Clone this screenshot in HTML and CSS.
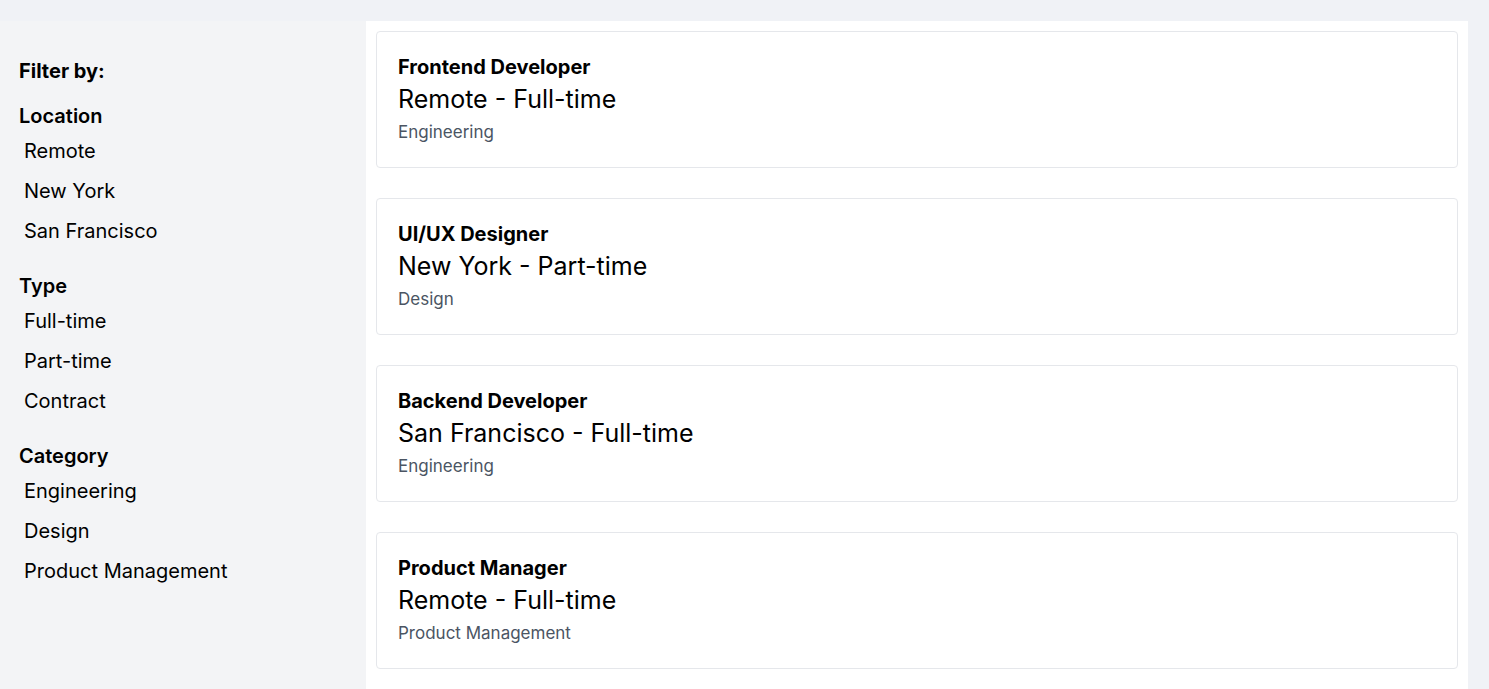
FILE: index.html
```html
<!DOCTYPE html>
<html lang="en">
<head>
<meta charset="utf-8">
<title>Jobs</title>
<link rel="stylesheet" href="styles.css">
</head>
<body>
<div class="layout">
  <aside class="sidebar">
    <h2 class="filter-title">Filter by:</h2>
    <div class="group">
      <h3 class="group-title">Location</h3>
      <ul class="options">
        <li>Remote</li>
        <li>New York</li>
        <li>San Francisco</li>
      </ul>
    </div>
    <div class="group">
      <h3 class="group-title">Type</h3>
      <ul class="options">
        <li>Full-time</li>
        <li>Part-time</li>
        <li>Contract</li>
      </ul>
    </div>
    <div class="group">
      <h3 class="group-title">Category</h3>
      <ul class="options">
        <li>Engineering</li>
        <li>Design</li>
        <li>Product Management</li>
      </ul>
    </div>
  </aside>
  <main class="main">
    <div class="card">
      <div class="job-title">Frontend Developer</div>
      <div class="job-meta">Remote - Full-time</div>
      <div class="job-cat">Engineering</div>
    </div>
    <div class="card">
      <div class="job-title">UI/UX Designer</div>
      <div class="job-meta">New York - Part-time</div>
      <div class="job-cat">Design</div>
    </div>
    <div class="card">
      <div class="job-title">Backend Developer</div>
      <div class="job-meta">San Francisco - Full-time</div>
      <div class="job-cat">Engineering</div>
    </div>
    <div class="card">
      <div class="job-title">Product Manager</div>
      <div class="job-meta">Remote - Full-time</div>
      <div class="job-cat">Product Management</div>
    </div>
  </main>
</div>
</body>
</html>
```

FILE: styles.css
```css
* { box-sizing: border-box; }
html, body { margin: 0; padding: 0; }
body {
  background: #f0f2f6;
  font-family: Inter, "Noto Sans", sans-serif;
  color: #000;
  padding-top: 21px;
  padding-right: 21px;
}
.layout {
  display: flex;
  align-items: stretch;
  min-height: 668px;
}
.sidebar {
  width: 366px;
  flex-shrink: 0;
  background: #f3f4f6;
  padding: 35px 19px 20px;
}
.filter-title {
  font-size: 20px;
  font-weight: 700;
  line-height: 30px;
  margin: 0 0 15px;
}
.group { margin-bottom: 25px; }
.group-title {
  font-size: 20px;
  font-weight: 600;
  line-height: 30px;
  margin: 0 0 5px;
}
.options {
  list-style: none;
  margin: 0;
  padding: 0;
}
.options li {
  font-size: 20px;
  line-height: 30px;
  padding: 0 5px;
  margin-bottom: 10px;
}
.main {
  flex: 1;
  background: #fff;
  padding: 10px;
  display: flex;
  flex-direction: column;
  gap: 30px;
}
.card {
  border: 1px solid #e5e7eb;
  border-radius: 4px;
  padding: 20px 21px 20px;
  height: 137px;
}
.job-title {
  font-size: 20px;
  font-weight: 700;
  line-height: 30px;
}
.job-meta {
  font-size: 25px;
  line-height: 34px;
}
.job-cat {
  font-size: 17px;
  line-height: 33px;
  color: #4b5563;
}
```
